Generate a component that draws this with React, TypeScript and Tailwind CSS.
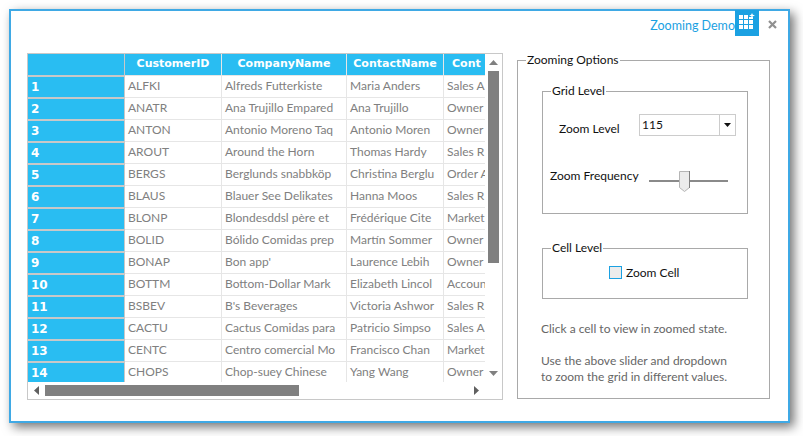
const rows = [
  ["ALFKI", "Alfreds Futterkiste", "Maria Anders", "Sales A"],
  ["ANATR", "Ana Trujillo Empared", "Ana Trujillo", "Owner"],
  ["ANTON", "Antonio Moreno Taq", "Antonio Moren", "Owner"],
  ["AROUT", "Around the Horn", "Thomas Hardy", "Sales R"],
  ["BERGS", "Berglunds snabbköp", "Christina Berglu", "Order A"],
  ["BLAUS", "Blauer See Delikates", "Hanna Moos", "Sales R"],
  ["BLONP", "Blondesddsl père et", "Frédérique Cite", "Market"],
  ["BOLID", "Bólido Comidas prep", "Martín Sommer", "Owner"],
  ["BONAP", "Bon app'", "Laurence Lebih", "Owner"],
  ["BOTTM", "Bottom-Dollar Mark", "Elizabeth Lincol", "Accoun"],
  ["BSBEV", "B's Beverages", "Victoria Ashwor", "Sales R"],
  ["CACTU", "Cactus Comidas para", "Patricio Simpso", "Sales A"],
  ["CENTC", "Centro comercial Mo", "Francisco Chan", "Market"],
  ["CHOPS", "Chop-suey Chinese", "Yang Wang", "Owner"],
];

function Grid() {
  return (
    <div className="w-[476px] h-[347px] border border-[#c8c8c8] flex flex-col">
      <div className="flex flex-1 min-h-0">
        <div className="w-[457px] overflow-hidden">
          {/* Header */}
          <div className="flex h-[21px] font-['DejaVu_Sans'] font-bold text-[11px] text-white">
            <div className="w-[97px] shrink-0 bg-[#29bdf2] border-r border-[#c8c8c8]" />
            <div className="w-[97px] shrink-0 bg-[#29bdf2] flex items-center justify-center border-r border-[#e6e6e6]">CustomerID</div>
            <div className="w-[125px] shrink-0 bg-[#29bdf2] flex items-center justify-center border-r border-[#e6e6e6]">CompanyName</div>
            <div className="w-[97px] shrink-0 bg-[#29bdf2] flex items-center justify-center border-r border-[#e6e6e6]">ContactName</div>
            <div className="w-[41px] shrink-0 bg-[#29bdf2] flex items-center pl-[8px] overflow-hidden whitespace-nowrap">Cont</div>
          </div>
          {rows.map((r, i) => (
            <div key={r[0]} className="flex h-[22px] text-[12px] text-[#808080]">
              <div className="w-[97px] shrink-0 bg-[#29bdf2] border-t-2 border-r border-[#c8c8c8] pl-[3px] pb-[1px] flex items-center font-['DejaVu_Sans'] font-bold text-[12px] text-white">{i + 1}</div>
              <div className="w-[97px] shrink-0 border-t border-r border-[#e6e6e6] pl-[3px] pb-[1px] flex items-center overflow-hidden whitespace-nowrap">{r[0]}</div>
              <div className="w-[125px] shrink-0 border-t border-r border-[#e6e6e6] pl-[3px] pb-[1px] flex items-center overflow-hidden whitespace-nowrap">{r[1]}</div>
              <div className="w-[97px] shrink-0 border-t border-r border-[#e6e6e6] pl-[3px] pb-[1px] flex items-center overflow-hidden whitespace-nowrap">{r[2]}</div>
              <div className="w-[41px] shrink-0 border-t border-[#e6e6e6] pl-[3px] pb-[1px] flex items-center overflow-hidden whitespace-nowrap">{r[3]}</div>
            </div>
          ))}
        </div>
        {/* Vertical scrollbar */}
        <div className="w-[17px] shrink-0 flex flex-col items-center">
          <svg width="9" height="5" viewBox="0 0 9 5" className="mt-[6px]"><path d="M4.500 0 9 5H0z" fill="#808080" /></svg>
          <div className="w-[11px] h-[192px] bg-[#808080] mt-[6px]" />
          <svg width="9" height="5" viewBox="0 0 9 5" className="mt-auto mb-[6px]"><path d="M0 0h9L4.500 5z" fill="#808080" /></svg>
        </div>
      </div>
      {/* Horizontal scrollbar */}
      <div className="h-[17px] shrink-0 flex items-center pl-[6px]">
        <svg width="5" height="9" viewBox="0 0 5 9"><path d="M5 0v9L0 4.500z" fill="#606060" /></svg>
        <div className="w-[254px] h-[11px] bg-[#808080] ml-[6px]" />
        <svg width="5" height="9" viewBox="0 0 5 9" className="ml-[175px]"><path d="M0 0v9l5-4.500z" fill="#606060" /></svg>
      </div>
    </div>
  );
}

function Options() {
  return (
    <fieldset className="w-[253px] h-[347px] -mt-[1px] border border-[#a9a9a9] pl-[24px] pr-[21px]">
      <legend className="-ml-[16px] px-[1px] text-[12px] leading-[16px] text-[#111]">Zooming Options</legend>

      <fieldset className="w-[206px] h-[131px] mt-[15px] border border-[#a9a9a9]">
        <legend className="ml-[8px] px-[1px] text-[12px] leading-[16px] text-[#111]">Grid Level</legend>
        <div className="flex items-center h-[22px] mt-[15px] pl-[16px]">
          <span className="w-[80px] text-[12px] mt-[8px] text-[#111]">Zoom Level</span>
          <div className="w-[97px] h-[22px] border border-[#cccccc] flex items-center text-[12px] text-[#111]">
            <span className="flex-1 pl-[2px] pb-[1px]">115</span>
            <div className="w-[16px] h-full border-l border-[#cccccc] flex items-center justify-center">
              <svg width="7" height="4" viewBox="0 0 7 4"><path d="M0 0h7L3.500 4z" fill="#111" /></svg>
            </div>
          </div>
        </div>
        <div className="flex items-start mt-[32px] pl-[7px]">
          <span className="w-[99px] text-[12px] leading-[16px] text-[#111]">Zoom Frequency</span>
          <svg width="80" height="22" viewBox="0 0 80 22" className="mt-[3px]">
            <rect x="0" y="9" width="79" height="2" fill="#8a8a8a" />
            <path d="M30.500 .5h10v16l-5 4-5-4z" fill="#ececec" stroke="#b5b5b5" />
            <path d="M40.500 0v17" stroke="#808080" />
          </svg>
        </div>
      </fieldset>

      <fieldset className="w-[206px] h-[59px] mt-[26px] border border-[#a9a9a9]">
        <legend className="ml-[8px] px-[1px] text-[12px] leading-[16px] text-[#111]">Cell Level</legend>
        <label className="flex items-center gap-[4px] ml-[66px] mt-[8px] text-[12px] leading-[17px] text-[#111]">
          <span className="w-[13px] h-[13px] border border-[#1ba1e2] bg-[#ececec]" />
          Zoom Cell
        </label>
      </fieldset>

      <p className="mt-[22px] -ml-[1px] text-[12px] leading-[16px] text-[#666666]">Click a cell to view in zoomed state.</p>
      <p className="mt-[16px] -ml-[1px] text-[12px] leading-[16px] text-[#666666]">
        Use the above slider and dropdown
        <br />
        to zoom the grid in different values.
      </p>
    </fieldset>
  );
}

export default function App() {
  return (
    <div className="w-[803px] h-[436px] bg-white pt-[9px] pl-[9px] font-['Lato']">
      <div className="w-[781px] h-[414px] border-2 border-[#3fa9e5] bg-white shadow-[4px_4px_10px_rgba(0,0,0,0.55)]">
        {/* Title bar */}
        <div className="flex items-start justify-end h-[42px] pr-[11px]">
          <span className="text-[#1ba1e2] text-[12.5px] mt-[6px]">Zooming Demo</span>
          <div className="w-[24px] h-[26px] -mt-[1px] bg-[#1ba1e2] pl-[4px] pt-[3px]">
            <svg width="16" height="18" viewBox="0 0 16 18" fill="white" className="block">
              <path d="M0 2h4v4H0zM5 2h4v4H5zM10 4h4v2h-4zM0 7h4v4H0zM5 7h4v4H5zM10 7h4v4h-4zM0 12h4v4H0zM5 12h4v4H5zM10 12h4v4h-4z" />
              <path d="M13 0l.8 1.700L16 2.500 13.800 3.300 13 5 12.200 3.300 10 2.500 12.200 1.700z" />
            </svg>
          </div>
          <svg width="9" height="9" viewBox="0 0 9 9" className="ml-[9px] mt-[9px]">
            <path d="M1 1l7 7M8 1 1 8" stroke="#909090" strokeWidth="2.200" />
          </svg>
        </div>
        <div className="flex gap-[14px] pl-[16px]">
          <Grid />
          <Options />
        </div>
      </div>
    </div>
  );
}
